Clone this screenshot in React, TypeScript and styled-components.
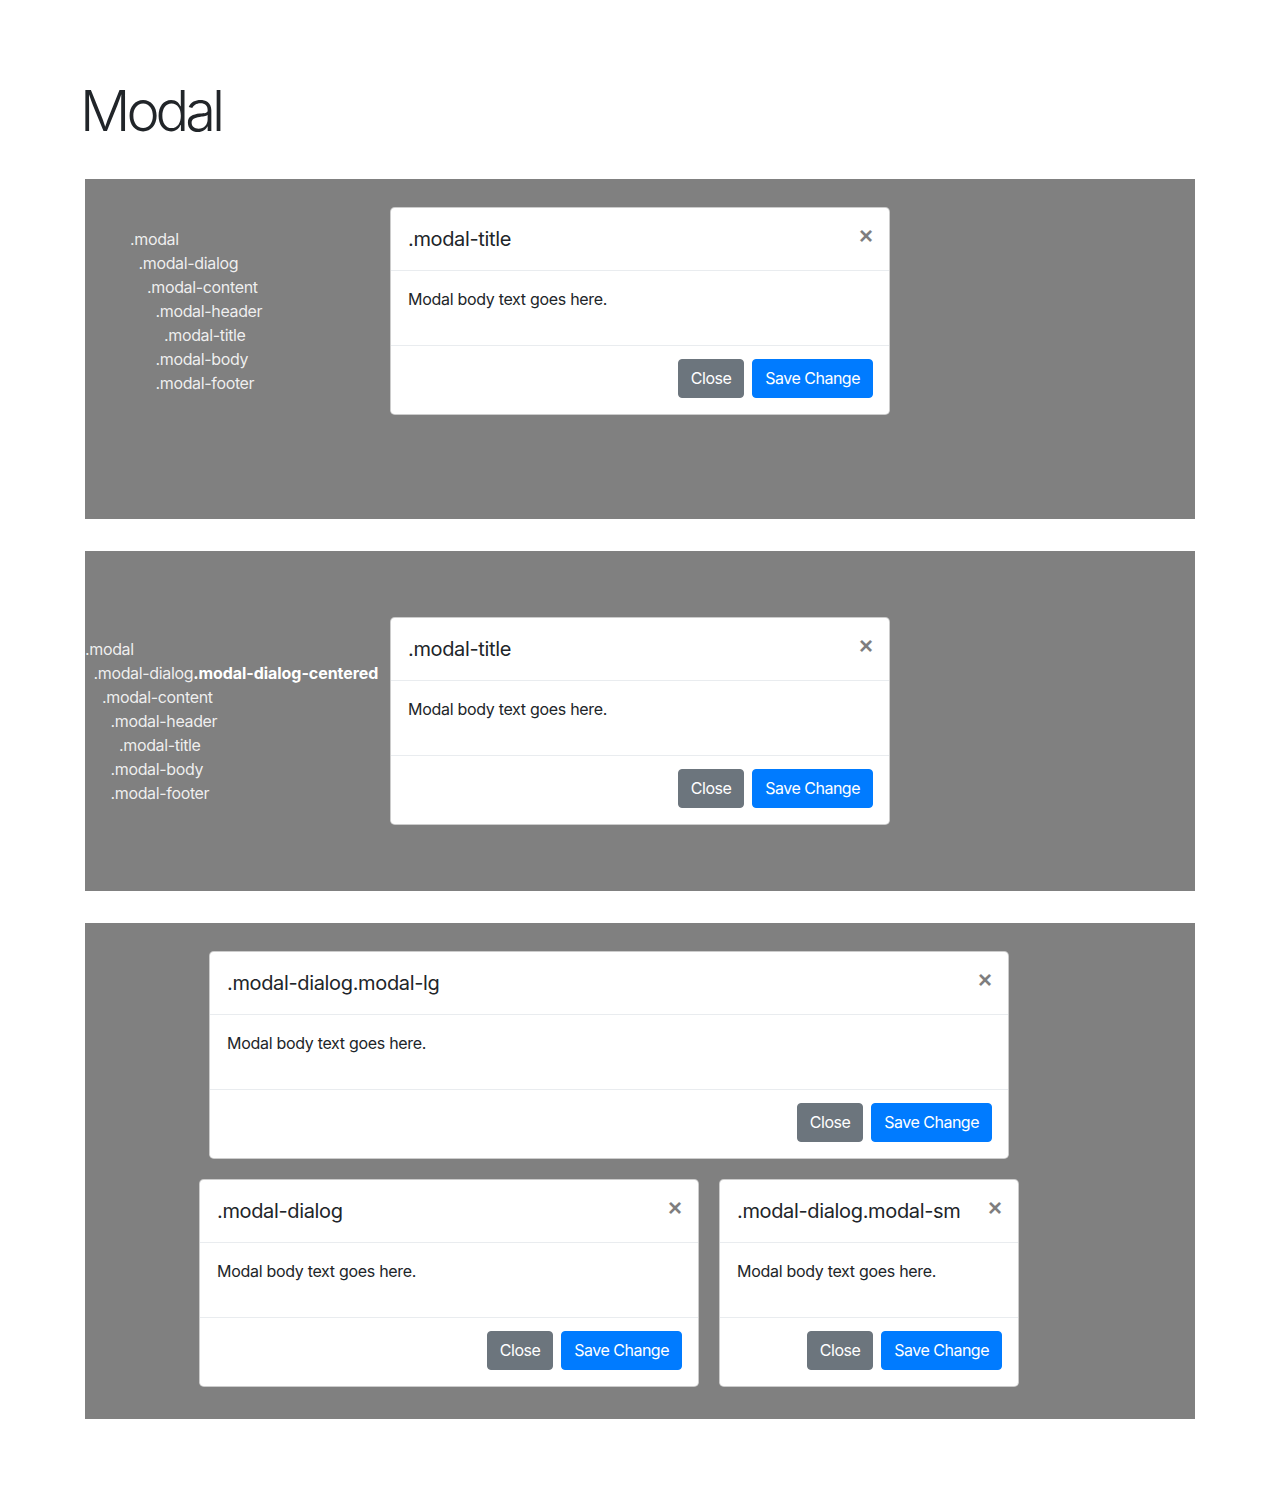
import React from "react";
import styled, { createGlobalStyle } from "styled-components";

const Global = createGlobalStyle`
  html, body { margin: 0; padding: 0; background: #fff; }
  body {
    font-family: Inter, "Noto Sans", "Liberation Sans", sans-serif;
    color: #212529;
    font-size: 16px;
    line-height: 1.5;
    letter-spacing: -0.3px;
  }
  * { box-sizing: border-box; }
`;

const Page = styled.div`
  width: 1280px;
  padding: 78px 85px 80px 85px;
`;

const Heading = styled.h1`
  margin: 0 0 34px -5px;
  font-size: 56px;
  font-weight: 300;
  line-height: 67px;
  letter-spacing: -4px;
  color: #212529;
`;

const Panels = styled.div`
  display: flex;
  flex-direction: column;
  gap: 32px;
`;

const Panel = styled.section<{ $align: "start" | "center" }>`
  width: 1110px;
  height: 340px;
  background: #808080;
  display: grid;
  grid-template-columns: 1fr 500px 1fr;
  align-items: center;
  align-content: ${(p) => (p.$align === "start" ? "start" : "center")};
  padding-top: ${(p) => (p.$align === "start" ? "28px" : "0")};
`;

const Labels = styled.div<{ $left: number }>`
  padding-left: ${(p) => p.$left}px;
  display: flex;
  flex-direction: column;
  color: rgba(255, 255, 255, 0.88);
  font-size: 16px;
  line-height: 24px;
  letter-spacing: -0.35px;
  white-space: nowrap;
`;

const Label = styled.div<{ $level: number }>`
  padding-left: ${(p) => p.$level * 8.5}px;
  b { font-weight: 700; color: #fff; letter-spacing: -0.05px; }
`;

const Dialog = styled.div<{ $w: number }>`
  width: ${(p) => p.$w}px;
  background: #fff;
  border: 1px solid rgba(0, 0, 0, 0.2);
  border-radius: 4.8px;
  display: flex;
  flex-direction: column;
`;

const Header = styled.div`
  display: flex;
  align-items: flex-start;
  justify-content: space-between;
  padding: 16px 16px 16px 17px;
  border-bottom: 1px solid #e9ecef;
`;

const Title = styled.h5`
  margin: 0;
  font-size: 20px;
  font-weight: 400;
  line-height: 30px;
  letter-spacing: -0.35px;
  color: #212529;
`;

const CloseX = styled.button`
  border: 0;
  background: transparent;
  padding: 16px;
  margin: -16px -16px -16px auto;
  font-family: "Liberation Sans", Arial, sans-serif;
  font-size: 24px;
  font-weight: 700;
  line-height: 1;
  color: #000;
  opacity: 0.5;
  cursor: pointer;
`;

const Body = styled.div`
  padding: 16px 16px 16px 17px;
  min-height: 74px;
  font-size: 16px;
  line-height: 24px;
  color: #212529;
`;

const Footer = styled.div`
  display: flex;
  justify-content: flex-end;
  align-items: center;
  padding: 13px 16px 16px;
  border-top: 1px solid #e9ecef;
  gap: 8px;
`;

const Btn = styled.button<{ $variant: "secondary" | "primary" }>`
  font-family: inherit;
  font-size: 16px;
  line-height: 24px;
  letter-spacing: -0.5px;
  padding: 6px 12px 7px;
  border-radius: 4px;
  border: 1px solid ${(p) => (p.$variant === "primary" ? "#007bff" : "#6c757d")};
  background: ${(p) => (p.$variant === "primary" ? "#007bff" : "#6c757d")};
  color: #fff;
  cursor: pointer;
`;

const Wrap = styled.div`
  display: flex;
  justify-content: center;
`;

const SizesPanel = styled.section`
  width: 1110px;
  background: #808080;
  padding: 28px 0 32px 114px;
  display: flex;
  flex-direction: column;
  gap: 20px;
`;

const LgRow = styled.div`
  padding-left: 10px;
`;

const Row = styled.div`
  display: flex;
  gap: 20px;
`;

function Modal({ title, width }: { title: string; width: number }) {
  return (
    <Dialog $w={width}>
      <Header>
        <Title>{title}</Title>
        <CloseX aria-label="Close">×</CloseX>
      </Header>
      <Body>Modal body text goes here.</Body>
      <Footer>
        <Btn $variant="secondary">Close</Btn>
        <Btn $variant="primary">Save Change</Btn>
      </Footer>
    </Dialog>
  );
}

function Anatomy({ centered }: { centered?: boolean }) {
  return (
    <>
      <Label $level={0}>.modal</Label>
      <Label $level={1}>
        .modal-dialog{centered && <b>.modal-dialog-centered</b>}
      </Label>
      <Label $level={2}>.modal-content</Label>
      <Label $level={3}>.modal-header</Label>
      <Label $level={4}>.modal-title</Label>
      <Label $level={3}>.modal-body</Label>
      <Label $level={3}>.modal-footer</Label>
    </>
  );
}

export default function App() {
  return (
    <>
      <Global />
      <Page>
        <Heading>Modal</Heading>
        <Panels>
          <Panel $align="start">
            <Labels $left={45}>
              <Anatomy />
            </Labels>
            <Wrap>
              <Modal title=".modal-title" width={500} />
            </Wrap>
          </Panel>
          <Panel $align="center">
            <Labels $left={0}>
              <Anatomy centered />
            </Labels>
            <Wrap>
              <Modal title=".modal-title" width={500} />
            </Wrap>
          </Panel>
          <SizesPanel>
            <LgRow>
              <Modal title=".modal-dialog.modal-lg" width={800} />
            </LgRow>
            <Row>
              <Modal title=".modal-dialog" width={500} />
              <Modal title=".modal-dialog.modal-sm" width={300} />
            </Row>
          </SizesPanel>
        </Panels>
      </Page>
    </>
  );
}
